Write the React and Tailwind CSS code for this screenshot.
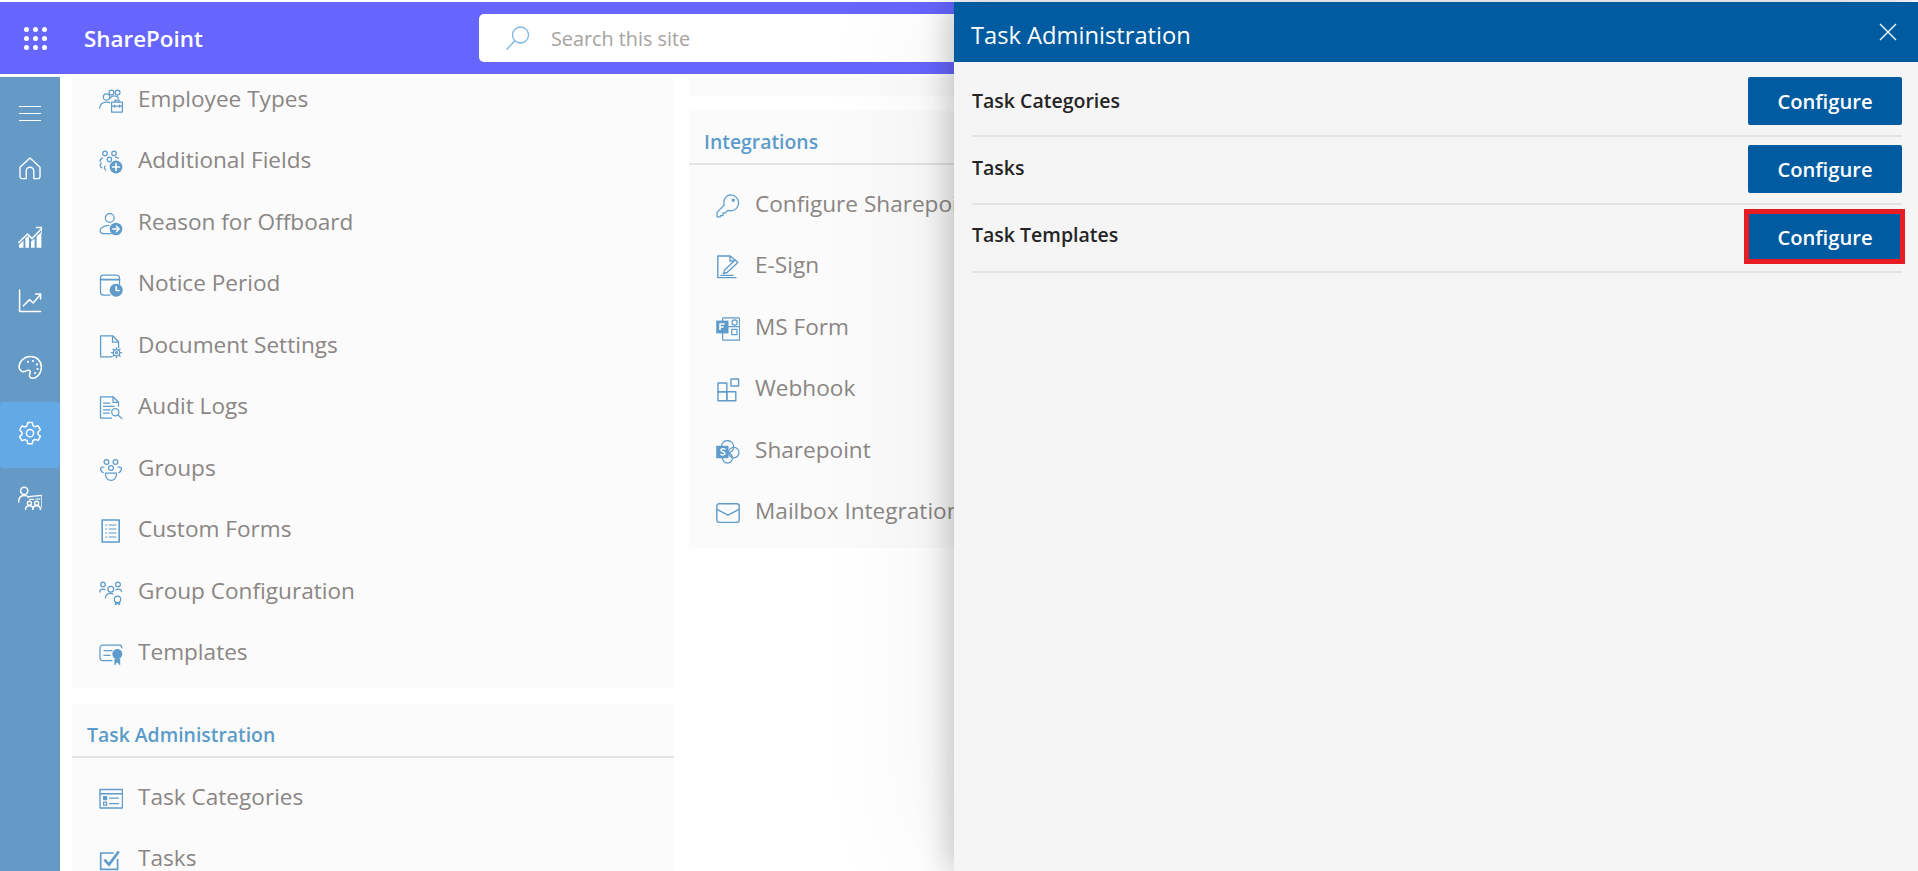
import React from "react";

const S = ({ children, className = "w-6 h-6 shrink-0" }) => (
  <svg viewBox="0 0 24 24" fill="none" stroke="currentColor" strokeWidth="1.25" strokeLinecap="round" strokeLinejoin="round" className={className}>
    {children}
  </svg>
);

const B = "#5f9ccb";

const I = {
  employee: (
    <S>
      <circle cx="7.5" cy="8" r="3.2" /><path d="M.7 19.2c.3-3.8 2.8-6.2 6.8-6.2 1.3 0 2.5.3 3.4.8" />
      <circle cx="12.5" cy="3.6" r="2.4" /><circle cx="18.6" cy="3.6" r="2.4" /><path d="M11.5 9c.5-1.4 2-2.3 3.7-2.2 2 0 3.7 1 4.3 2.6" />
      <rect x="12.6" y="13.2" width="10.8" height="9.8" fill="#fbfbfb" /><path d="M16 13v-2h4v2M12.6 17h10.8M15.5 16v2.2M20.5 16v2.2" />
    </S>
  ),
  additional: (
    <S>
      <circle cx="6" cy="3.4" r="2.2" /><circle cx="15" cy="3.4" r="2.2" /><circle cx="10.4" cy="9.4" r="2.2" />
      <path d="M1 11.5c0-1.8 1-3 2.6-3.4M19.5 8.2c-1-.8-2-1.2-3-1.2M2.6 13c-2 1-2 4 .4 4.8M6.5 20c-1-1-1.4-2.4-.6-4" />
      <circle cx="17" cy="17" r="6.4" fill={B} stroke="none" /><path d="M17 13.6v6.8M13.6 17h6.8" stroke="#fff" strokeWidth="1.6" />
    </S>
  ),
  reason: (
    <S>
      <circle cx="10.8" cy="6" r="4.4" /><path d="M10 13.3c-5 0-9 2.5-9 5.4 0 2 2 3 5 3h6" />
      <circle cx="17" cy="17" r="6.3" fill={B} stroke="none" /><path d="M13.8 17h6M17.4 14.2l2.8 2.8-2.8 2.8" stroke="#fff" strokeWidth="1.5" />
    </S>
  ),
  notice: (
    <S>
      <path d="M11 22H4.5A3 3 0 0 1 1.5 19V5a3 3 0 0 1 3-3h13a3 3 0 0 1 3 3v6" /><path d="M1.5 6.6h19" strokeWidth="1.8" />
      <circle cx="17.2" cy="17.2" r="6.5" fill={B} stroke="none" /><path d="M17.2 13.6v3.8h3" stroke="#fff" strokeWidth="1.5" />
    </S>
  ),
  document: (
    <S>
      <path d="M13 21.8H1.6V.8h12l6 6v6.4" strokeLinecap="butt" /><path d="M13.5 1v6h6" />
      <circle cx="17.5" cy="17.7" r="3.2" /><circle cx="17.5" cy="17.7" r="1" />
      <path d="M17.5 12.6v1.8M17.5 21v1.8M12.4 17.7h1.8M20.8 17.7h1.8M13.9 14.1l1.2 1.2M19.9 20.1l1.2 1.2M13.9 21.3l1.2-1.2M19.9 15.3l1.2-1.2" />
    </S>
  ),
  audit: (
    <S>
      <path d="M13 22H1.5V.8h12.5l5.5 5.5v4.5" strokeLinecap="butt" /><path d="M14 1v5.3h5.2M4.6 7h6M4.6 10.4h10.5M4.6 13.8h6.5M4.6 17.2h5.5" />
      <circle cx="16.3" cy="16.3" r="3.6" /><path d="M19 19l4 3.6" />
    </S>
  ),
  groups: (
    <S>
      <circle cx="7.5" cy="4" r="2.4" /><circle cx="16.5" cy="4" r="2.4" /><circle cx="12" cy="10" r="2.4" />
      <path d="M5 9H3.6C2.4 9 1.6 9.8 1.6 11c0 1.8.9 3 2.6 3.6M19 9h1.4c1.2 0 2 .8 2 2 0 1.8-.9 3-2.6 3.6" />
      <path d="M6.6 15.2h10.8v1.8a5.4 5.4 0 0 1-10.8 0z" />
    </S>
  ),
  forms: (
    <S>
      <rect x="3.2" y="1" width="17" height="22" strokeWidth="1.6" />
      <path d="M6.6 6h1M10 6h7M6.6 10h1M10 10h7M6.6 14h1M10 14h7M6.6 18h1M10 18h7" strokeWidth="1.1" />
    </S>
  ),
  groupcfg: (
    <S>
      <circle cx="4" cy="3.4" r="2.3" /><circle cx="19" cy="3.4" r="2.3" /><circle cx="11.8" cy="8.3" r="2.9" />
      <path d="M.8 11c0-1.8 1-3 3-3 1 0 1.8.3 2.2.8M22.6 10.4c-.3-1.6-1.4-2.4-3.2-2.4-1 0-1.8.3-2.3.8M6.4 17c0-2.7 2-4.6 5-4.6 1 0 2 .2 2.6.6" />
      <circle cx="18.5" cy="18.3" r="3.2" /><path d="M16.4 21v2.4l2.1-1 2.1 1V21" />
    </S>
  ),
  templates: (
    <S>
      <path d="M13 18.5H3.8A2.8 2.8 0 0 1 1 15.7V5.8A2.8 2.8 0 0 1 3.8 3h16a3 3 0 0 1 3 2.8" />
      <path d="M5 8.5h8M5 13.4h6" />
      <circle cx="18.3" cy="12" r="5" fill={B} stroke="none" />
      <path d="M15.4 16.5v6.7l2.9-1.8 2.9 1.8v-6.7z" fill={B} stroke="none" /><path d="M17 21.4l1.3-1 1.3 1v2h-2.6z" fill="#fbfbfb" stroke="none" />
    </S>
  ),
  categories: (
    <S>
      <rect x="1" y="2.5" width="22.5" height="18.5" strokeWidth="1.4" /><path d="M1 6.7h22.5" strokeWidth="1.4" />
      <rect x="4.6" y="9.6" width="3" height="3" strokeWidth="1.2" fill={B} /><rect x="4.6" y="15.2" width="3" height="3" strokeWidth="1.2" />
      <path d="M10.5 11h9M10.5 16.7h9" />
    </S>
  ),
  tasks: (
    <S>
      <path d="M18.6 11v10.4H1.7V5h13" strokeWidth="1.7" strokeLinecap="butt" /><path d="M5.4 11.6l4.6 5L19.8 3.4" strokeWidth="2.6" strokeLinecap="butt" strokeLinejoin="miter" />
    </S>
  ),
  key: (
    <S>
      <path d="M14.8.9a8 8 0 0 1 7.8 8c0 4.6-3.7 8-8 8-.9 0-1.8-.2-2.7-.5l-2.6 2.4H7v2.7H4.4v1.3H1V18.4L8.2 11c-.3-.8-.4-1.5-.4-2.2C7.8 4.3 11 .9 14.8.9z" />
      <circle cx="17.2" cy="6.2" r="1" fill={B} />
    </S>
  ),
  esign: (
    <S>
      <path d="M19.4 5.6 14.2 1H1.8v21.6h18.6M14 1v5h5.4" strokeWidth="1.4" strokeLinecap="butt" />
      <path d="M7.5 18.5l1-3.6 10.8-10 2.5 2.6-10.7 10z" fill="#fbfbfb" strokeWidth="1.3" /><path d="M5 20.4h12" strokeWidth="1.3" />
    </S>
  ),
  msform: (
    <S>
      <rect x="6.6" y=".8" width="17" height="22.4" rx="1" />
      <circle cx="18.6" cy="5.4" r="2.6" /><rect x="15.8" y="12.4" width="5.2" height="5.2" /><path d="M7 9.6h16.6" />
      <rect x=".2" y="3.6" width="12.3" height="12.8" fill={B} stroke="none" />
      <path d="M4 13V7h4.6M4 10h3.6" stroke="#fff" strokeWidth="1.5" strokeLinecap="butt" />
    </S>
  ),
  webhook: (
    <S>
      <rect x="2" y="5" width="8.8" height="8.8" strokeWidth="1.4" /><rect x="2" y="13.8" width="8.8" height="9" strokeWidth="1.4" />
      <rect x="10.8" y="13.8" width="9" height="9" strokeWidth="1.4" /><rect x="15" y="1" width="7.6" height="7" strokeWidth="1.4" />
    </S>
  ),
  sharepoint: (
    <S>
      <circle cx="11.5" cy="6.8" r="6.2" /><circle cx="17.8" cy="12.6" r="5.2" /><circle cx="11.5" cy="18" r="5" />
      <rect x=".2" y="5.8" width="12.3" height="12.4" fill={B} stroke="none" />
      <path d="M9 9.2c-2.2-1.2-4.4-.4-4 1.2.4 1.6 3.8 1.2 4 3 .2 1.6-2.4 2-4.2 1" stroke="#fff" strokeWidth="1.4" />
    </S>
  ),
  mail: (
    <S>
      <rect x=".8" y="2.8" width="22.4" height="18.6" rx="2.4" strokeWidth="1.4" /><path d="M1 8.4l11 5.8 11-5.8" strokeWidth="1.4" />
    </S>
  ),
};

const Side = {
  home: (
    <S>
      <path d="M2 11.2 12 2l10 9.2v9a2.4 2.4 0 0 1-2.4 2.4h-3.8v-7.6a3.8 3.8 0 0 0-7.6 0v7.6H4.4A2.4 2.4 0 0 1 2 20.2z" strokeWidth="1.4" />
    </S>
  ),
  growth: (
    <S>
      <path d="M.8 17.5 9.5 9l4.6 4.6L24 3.2" strokeWidth="1.5" /><path d="M18.5 2.4h5.6V8" strokeWidth="1.5" />
      <path d="M1 22.8v-3l4.5-4.4v7.4zM7.4 22.8V13l3.6-2v11.8zM13 22.8v-6.4l3.6-2.6v9zM18.6 22.8V11.4l4.8-4.4v15.8z" fill="#fff" stroke="none" />
    </S>
  ),
  line: (
    <S>
      <path d="M1.6 1v21.4h21" strokeWidth="1.5" /><path d="M5.4 16.8l6.2-6.2 3.6 3.4 7.2-8.6" strokeWidth="1.5" /><path d="M17.6 5h5v5" strokeWidth="1.5" />
    </S>
  ),
  palette: (
    <S>
      <path d="M12.6 1.6c6.4 0 10.8 4.6 10.8 10.6 0 6-4.4 11-9 11-3.2 0-3.4-3-2.4-5 1-2.2-.4-3.6-2.6-2.8-2.4 1-4 2-5.6 1C1.6 15 1 13.4 1 12 1 6.6 6 1.6 12.6 1.6z" strokeWidth="1.5" />
      <circle cx="10" cy="6.8" r="1.1" fill="#fff" stroke="none" /><circle cx="15" cy="6" r="1.1" fill="#fff" stroke="none" />
      <circle cx="19" cy="9.4" r="1.1" fill="#fff" stroke="none" /><circle cx="19.6" cy="14" r="1.1" fill="#fff" stroke="none" /><circle cx="17" cy="18" r="1.1" fill="#fff" stroke="none" />
    </S>
  ),
  gear: (
    <S>
      <path d="M9.7 1.5h4.6l.7 3.2 2 1.1 3.1-1 2.3 4-2.4 2.2v2.2l2.4 2.2-2.3 4-3.1-1-2 1.1-.7 3.2H9.7L9 19.7l-2-1.1-3.1 1-2.3-4L4 13.4v-2.2L1.6 9l2.3-4 3.1 1 2-1.1z" strokeWidth="1.5" />
      <circle cx="12" cy="12.2" r="3.6" strokeWidth="1.5" />
    </S>
  ),
  people: (
    <S>
      <circle cx="6.2" cy="4.8" r="3.6" strokeWidth="1.5" /><path d="M.6 16c0-4 2.4-6.4 6-6.4 2 0 3 .6 4 1.6" strokeWidth="1.5" />
      <path d="M10.4 10.6 24 9.4v11.8" strokeWidth="1.4" /><path d="M11.6 13.4h4M18 13h4" strokeWidth="1.2" />
      <circle cx="11.4" cy="17.2" r="2" strokeWidth="1.4" /><circle cx="18.6" cy="17.2" r="2" strokeWidth="1.4" />
      <path d="M7.6 23.4c0-2.4 1.4-3.6 3.8-3.6s3.8 1.2 3.8 3.6M14.8 23.4c0-2.4 1.4-3.6 3.8-3.6s3.8 1.2 3.8 3.6" strokeWidth="1.4" />
    </S>
  ),
};

const Row = ({ icon, label }) => (
  <div className="flex items-center h-[61.5px] pl-[27px] text-[#8a8684] whitespace-nowrap">
    <span className="text-[#5f9ccb] mr-[16px] flex mt-[2px]">{icon}</span>
    <span className="text-[22.6px] leading-[22px] -ml-[1px] -mt-[2px]">{label}</span>
  </div>
);

const Card = ({ title, children, className = "" }) => (
  <section className={`bg-[#fbfbfb] overflow-hidden ${className}`}>
    {title && (
      <h2 className="h-[54px] flex items-center pl-[15px] pt-[9px] border-b-2 border-[#e3e3e3] text-[19.4px] font-semibold text-[#5b9bc9] whitespace-nowrap">
        {title}
      </h2>
    )}
    {children}
  </section>
);

const firstList = [
  [I.employee, "Employee Types"], [I.additional, "Additional Fields"], [I.reason, "Reason for Offboard"],
  [I.notice, "Notice Period"], [I.document, "Document Settings"], [I.audit, "Audit Logs"], [I.groups, "Groups"],
  [I.forms, "Custom Forms"], [I.groupcfg, "Group Configuration"], [I.templates, "Templates"],
];
const integrations = [
  [I.key, "Configure Sharepoint"], [I.esign, "E-Sign"], [I.msform, "MS Form"], [I.webhook, "Webhook"],
  [I.sharepoint, "Sharepoint"], [I.mail, "Mailbox Integration"],
];

const navItems = [
  [Side.home, ""],
  [Side.growth, "mt-[3px]"],
  [Side.line, "pb-[4px]"],
  [Side.palette, "pb-[4px]"],
  [Side.gear, "pb-[4px] bg-[#62a9e6] rounded-[4px]"],
  [Side.people, "pb-[6px]"],
];

const PanelRow = ({ label, lift, marked }) => (
  <div className="h-[68px] pb-[2px] flex items-center justify-between border-b-2 border-[#e3e3e3]">
    <span className={`text-[19.5px] font-semibold text-[#242424] ${lift}`}>{label}</span>
    <button className="relative w-[154px] h-[48px] rounded-[2px] bg-[#005ba1] text-white text-[20.2px] font-semibold">
      Configure
      {marked && <span className="absolute -top-[4px] -left-[4px] -right-[3px] -bottom-[3px] border-[5px] border-[#e81c23]" />}
    </button>
  </div>
);

export default function App() {
  return (
    <div className="relative h-[871px] overflow-hidden bg-white pt-[2px] font-['Open_Sans',sans-serif]">
      <header className="h-[72px] bg-[#6666ff] flex items-center">
        <div className="w-[84px] pl-6 shrink-0">
          <div className="grid grid-cols-3 gap-x-1 gap-y-1 w-[23px]">
            {Array.from({ length: 9 }).map((_, i) => (
              <span key={i} className="w-[5px] h-[5px] rounded-full bg-white" />
            ))}
          </div>
        </div>
        <div className="w-[395px] shrink-0 text-white text-[22.4px] font-semibold pt-[2px]">SharePoint</div>
        <div className="w-[700px] h-[48px] bg-white rounded-[5px] flex items-center pl-[27px]">
          <svg viewBox="0 0 24 24" fill="none" stroke="#76b3e0" strokeWidth="1.3" className="w-6 h-6 shrink-0 mr-[21px]">
            <circle cx="14.5" cy="9" r="8" /><path d="M8.6 15 .8 23.4" strokeLinecap="round" />
          </svg>
          <span className="text-[#a6a3a1] text-[19.8px] pt-[2px]">Search this site</span>
        </div>
      </header>

      <div className="mt-[3px] flex h-[794px]">
        <nav className="w-[60px] shrink-0 bg-[#659ac6] pt-[14px] text-white">
          <div className="h-[44px] pt-[1px] flex items-center justify-center">
            <div className="w-[22px] flex flex-col gap-[5.5px]">
              <span className="h-[1.5px] bg-white" /><span className="h-[1.5px] bg-white" /><span className="h-[1.5px] bg-white" />
            </div>
          </div>
          {navItems.map(([icon, cls], i) => (
            <div key={i} className={`h-[66px] flex items-center justify-center ${cls}`}>
              {icon}
            </div>
          ))}
        </nav>

        <main className="flex gap-[15px] pl-[12px] min-w-0">
          <div className="w-[602px] shrink-0 flex flex-col gap-4">
            <Card className="h-[611px]">
              <div className="-mt-[8px]">
                {firstList.map(([icon, label]) => <Row key={label} icon={icon} label={label} />)}
              </div>
            </Card>
            <Card title="Task Administration" className="flex-1">
              <div className="pt-[9px]">
                <Row icon={I.categories} label="Task Categories" />
                <Row icon={I.tasks} label="Tasks" />
              </div>
            </Card>
          </div>
          <div className="w-[602px] shrink-0 flex flex-col gap-[15px]">
            <Card className="h-[19px]" />
            <Card title="Integrations" className="h-[437px]">
              <div className="pt-[9px]">
                {integrations.map(([icon, label]) => <Row key={label} icon={icon} label={label} />)}
              </div>
            </Card>
          </div>
        </main>
      </div>

      <aside className="absolute top-[2px] right-0 bottom-0 w-[964px] bg-[#f5f5f5] shadow-[-6px_0_28px_rgba(0,0,0,0.2),-30px_0_120px_rgba(0,0,0,0.05)]">
        <div className="h-[60px] bg-[#005ba1] flex items-center justify-between pl-[17px] pr-[21px] text-white">
          <h1 className="text-[23.7px] pt-[7px]">Task Administration</h1>
          <svg viewBox="0 0 18 18" stroke="#fff" strokeWidth="1.3" className="w-[18px] h-[18px]">
            <path d="M1 1l16 16M17 1 1 17" />
          </svg>
        </div>
        <div className="pt-[7px] pl-[18px] pr-4">
          <PanelRow label="Task Categories" lift="" />
          <PanelRow label="Tasks" lift="pb-[2px]" />
          <PanelRow label="Task Templates" lift="pb-[4px]" marked />
        </div>
      </aside>
    </div>
  );
}
